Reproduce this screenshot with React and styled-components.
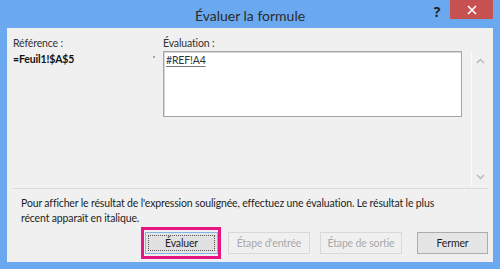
import React from "react";
import styled, { createGlobalStyle } from "styled-components";

const GlobalStyle = createGlobalStyle`
  html, body {
    margin: 0;
    padding: 0;
    background: #ffffff;
  }
  body {
    font-family: Lato, "Open Sans", sans-serif;
  }
`;

const ChevronUp = () => (
  <svg width="9" height="6" viewBox="0 0 9 6">
    <polyline points="1,5 4.5,1.5 8,5" fill="none" stroke="#b5b5b5" strokeWidth="1.3" />
  </svg>
);

const ChevronDown = () => (
  <svg width="9" height="6" viewBox="0 0 9 6">
    <polyline points="1,1 4.5,4.5 8,1" fill="none" stroke="#b5b5b5" strokeWidth="1.3" />
  </svg>
);

const App = () => {
  return (
    <>
      <GlobalStyle />
      <Frame>
        <TitleBar>
          <Title>Évaluer la formule</Title>
          <Controls>
            <HelpButton>?</HelpButton>
            <CloseButton>
              <svg width="10" height="10" viewBox="0 0 10 10">
                <path d="M1 1 L9 9 M9 1 L1 9" stroke="#ffffff" strokeWidth="1.6" />
              </svg>
            </CloseButton>
          </Controls>
        </TitleBar>
        <Content>
          <Panel>
            <Fields>
              <Label>Référence :</Label>
              <span />
              <Label>Évaluation :</Label>
              <Reference>=Feuil1!$A$5</Reference>
              <Bullet />
              <Result>
                <Underlined>#REF!A4</Underlined>
              </Result>
            </Fields>
            <ScrollTrack>
              <ChevronUp />
              <ChevronDown />
            </ScrollTrack>
          </Panel>
          <Hint>
            Pour afficher le résultat de l'expression soulignée, effectuez une évaluation. Le résultat le plus
            <br />
            récent apparaît en italique.
          </Hint>
          <ButtonRow>
            <Highlight>
              <Button focused>
                <FocusRing>Évaluer</FocusRing>
              </Button>
            </Highlight>
            <Button disabled gap={7}>Étape d'entrée</Button>
            <Button disabled gap={10}>Étape de sortie</Button>
            <Button last gap={15}>Fermer</Button>
          </ButtonRow>
        </Content>
      </Frame>
    </>
  );
};

export default App;

const Frame = styled.div`
  width: 500px;
  height: 269px;
  box-sizing: border-box;
  background: #6aa9f0;
  padding: 0 7px 7px 7px;
  display: flex;
  flex-direction: column;
`;

const TitleBar = styled.div`
  height: 28px;
  position: relative;
  display: flex;
  align-items: center;
  justify-content: center;
`;

const Title = styled.div`
  font-size: 14px;
  color: #2b2b2b;
  padding-top: 2px;
`;

const Controls = styled.div`
  position: absolute;
  top: 0;
  right: 0;
  display: flex;
  align-items: flex-start;
`;

const HelpButton = styled.div`
  width: 26px;
  height: 19px;
  font-family: "Open Sans", sans-serif;
  font-size: 14px;
  font-weight: 700;
  color: #222;
  display: flex;
  align-items: center;
  justify-content: center;
  padding-top: 4px;
  box-sizing: border-box;
`;

const CloseButton = styled.div`
  width: 43px;
  height: 19px;
  background: #c75050;
  display: flex;
  align-items: center;
  justify-content: center;
`;

const Content = styled.div`
  flex: 1;
  background: #f0f0f0;
  display: flex;
  flex-direction: column;
  padding: 0 5px 3px 6px;
  font-size: 10.5px;
  letter-spacing: -0.15px;
  color: #1e1e1e;
`;

const Panel = styled.div`
  height: 161px;
  box-sizing: border-box;
  border-bottom: 1px solid #dcdcdc;
  display: flex;
`;

const Fields = styled.div`
  display: grid;
  grid-template-columns: 139px 11px 299px;
  grid-template-rows: 15px auto;
  align-content: start;
  padding-top: 8px;
  line-height: 15px;
`;

const Label = styled.div`
  color: #333;
`;

const Reference = styled.div`
  font-weight: 700;
  color: #111;
  padding-top: 1px;
`;

const Bullet = styled.div`
  width: 2px;
  height: 2px;
  background: #a8a8a8;
  margin: 5px 0 0 1px;
`;

const Result = styled.div`
  height: 66px;
  box-sizing: border-box;
  background: #ffffff;
  border: 1px solid #a6a6a6;
  box-shadow: inset 1px 1px 0 #d8d8d8;
  padding: 1px 2px;
  color: #333;
`;

const Underlined = styled.span`
  text-decoration: underline;
  text-decoration-color: #777;
  text-underline-offset: 2px;
`;

const ScrollTrack = styled.div`
  margin: 23px 0 2px 9px;
  width: 17px;
  border-left: 1px solid #fbfbfb;
  display: flex;
  flex-direction: column;
  justify-content: space-between;
  align-items: center;
  padding: 7px 0 6px 0;
`;

const Hint = styled.p`
  margin: 7px 0 0 8px;
  line-height: 15px;
  white-space: nowrap;
`;

const ButtonRow = styled.div`
  margin-top: auto;
  display: flex;
  justify-content: flex-end;
  align-items: center;
  height: 32px;
`;

const Highlight = styled.div`
  border: 3px solid #e6157f;
  padding: 2px 0 2px 1px;
  height: 32px;
  box-sizing: border-box;
  display: flex;
  align-items: center;
`;

const Button = styled.button`
  font-family: inherit;
  font-size: 10.5px;
  letter-spacing: inherit;
  height: 22px;
  width: ${(p) => (p.focused ? "73px" : p.last ? "71px" : "82px")};
  margin-left: ${(p) => (p.gap ? `${p.gap}px` : "0")};
  box-sizing: border-box;
  padding: ${(p) => (p.focused ? "2px" : "0")};
  border: 1px solid
    ${(p) => (p.focused ? "#7eb4ea" : p.disabled ? "#d9d9d9" : "#acacac")};
  background: ${(p) => (p.disabled ? "#f0f0f0" : "#e5e5e5")};
  color: ${(p) => (p.disabled ? "#a8a8a8" : "#1e1e1e")};
  display: flex;
  align-items: center;
  justify-content: center;
`;

const FocusRing = styled.span`
  flex: 1;
  align-self: stretch;
  display: flex;
  align-items: center;
  justify-content: center;
  border: 1px dotted #555;
  background: #e1e1e1;
`;
